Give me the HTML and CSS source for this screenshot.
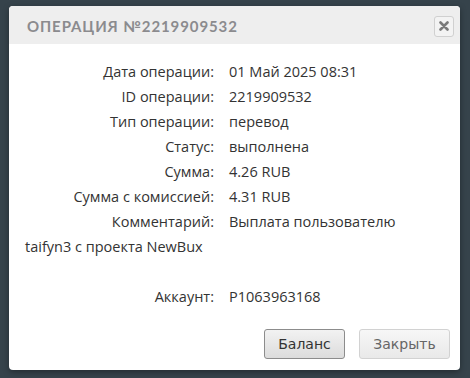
FILE: index.html
```html
<!DOCTYPE html>
<html>
<head>
    <link rel="stylesheet" href="styles.css">
</head>
<body>
    <div class="dialog">
        <div class="dialog-header">
            <span class="dialog-title">Операция №2219909532</span>
            <button class="close-btn" title="Закрыть">
                <svg width="10" height="10" viewBox="0 0 10 10">
                    <path d="M1.5 1.5 L8.5 8.5 M8.5 1.5 L1.5 8.5" stroke="#7a7a7a" stroke-width="2.6" stroke-linecap="round"/>
                </svg>
            </button>
        </div>

        <div class="dialog-body">
            <div class="row"><span class="label">Дата операции:</span><span>01 Май 2025 08:31</span></div>
            <div class="row"><span class="label">ID операции:</span><span>2219909532</span></div>
            <div class="row"><span class="label">Тип операции:</span><span>перевод</span></div>
            <div class="row"><span class="label">Статус:</span><span>выполнена</span></div>
            <div class="row"><span class="label">Сумма:</span><span>4.26 RUB</span></div>
            <div class="row"><span class="label">Сумма с комиссией:</span><span>4.31 RUB</span></div>
            <div class="row"><span class="label">Комментарий:</span><span>Выплата пользователю</span></div>
            <div class="row comment-tail">taifyn3 с проекта NewBux</div>
            <div class="row"><span class="label">Аккаунт:</span><span>P1063963168</span></div>
        </div>

        <div class="dialog-footer">
            <button class="btn btn-main">Баланс</button>
            <button class="btn btn-light">Закрыть</button>
        </div>
    </div>
</body>
</html>
```

FILE: styles.css
```css
/* тёмная подложка страницы */
body {
    margin: 0;
    background: #36434b;
    height: 100vh;
    overflow: hidden;
    font-family: 'Open Sans', 'DejaVu Sans', sans-serif;
}

/* окно операции */
.dialog {
    margin: 6px 0 0 9px;
    width: 451px;
    height: 364px;
    background: #fff;
    border-radius: 4px;
    box-shadow: 0 2px 6px rgba(0,0,0,0.35);
    display: flex;
    flex-direction: column;
    overflow: hidden;
}

.dialog-header {
    height: 38px;
    background: #eeeeee;
    display: flex;
    align-items: center;
    justify-content: space-between;
    padding: 0 6px 0 18px;
}

.dialog-title {
    font-family: 'Lato', 'Open Sans', sans-serif;
    font-weight: bold;
    font-size: 15px;
    letter-spacing: 0.9px;
    text-transform: uppercase;
    color: #8b8b8e;
    margin-top: 1px;
}

.close-btn {
    width: 20px;
    height: 21px;
    padding: 0;
    margin-top: 2px;
    border: 1px solid #d0d0d0;
    border-radius: 3px;
    background: #f3f3f3;
    display: flex;
    align-items: center;
    justify-content: center;
    cursor: pointer;
}

/* строки с данными */
.dialog-body {
    padding: 15px 24px 0 16px;
    font-size: 14.5px;
    font-weight: 500;
    line-height: 25px;
    color: #333;
}

.label {
    display: inline-block;
    width: 189px;
    margin-right: 15px;
    text-align: right;
}

.comment-tail {
    margin-bottom: 25px;
}

/* кнопки */
.dialog-footer {
    margin-top: auto;
    display: flex;
    justify-content: flex-end;
    gap: 14px;
    padding: 0 10px 11px 0;
}

.btn {
    height: 30px;
    border-radius: 3px;
    font-family: 'DejaVu Sans', sans-serif;
    font-size: 14px;
    cursor: pointer;
}

.btn-main {
    width: 81px;
    border: 1px solid #8c8c8c;
    background: linear-gradient(#f2f2f2, #dcdcdc);
    color: #333;
}

.btn-light {
    width: 91px;
    border: 1px solid #d2d2d2;
    background: linear-gradient(#f7f7f7, #e9e9e9);
    color: #666;
}
```
